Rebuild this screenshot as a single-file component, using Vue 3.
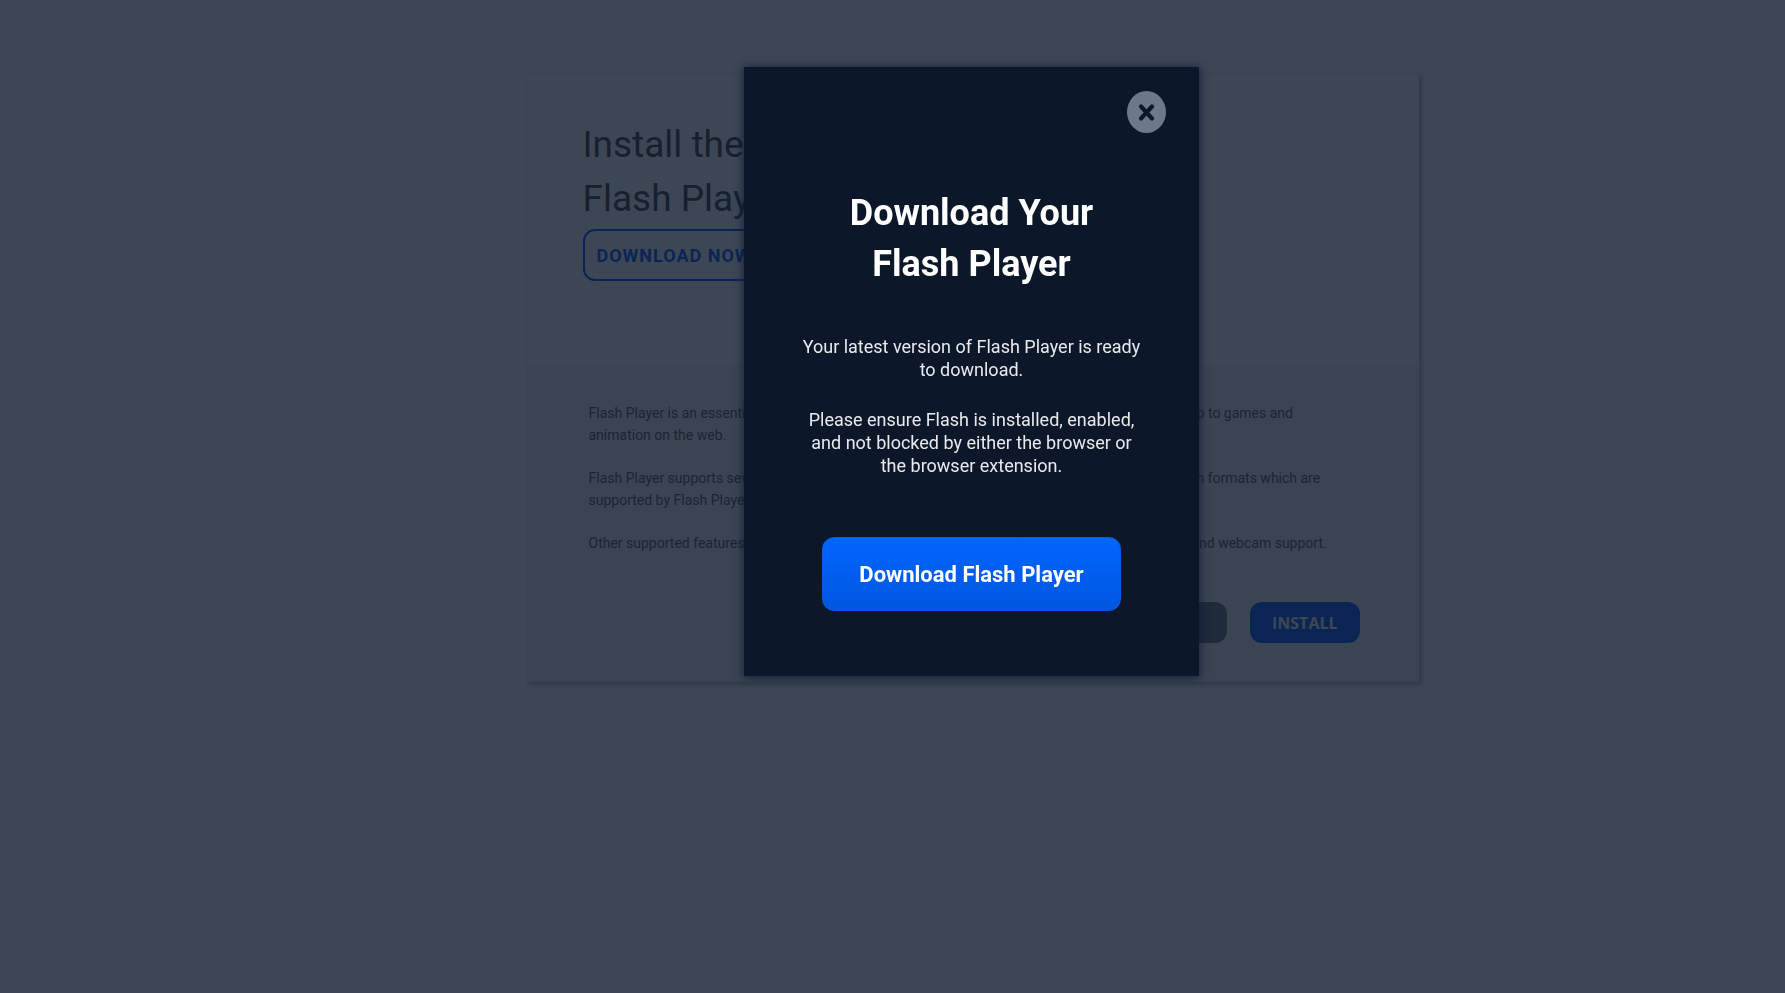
<script setup>
import { ref } from 'vue'

const dialogOpen = ref(true)
const closeDialog = () => {
  dialogOpen.value = false
}
</script>

<template>
  <div class="page">
    <main class="card">
      <section class="hero">
        <h1>Install the Latest<br />Flash Player Today</h1>
        <button class="download-now" type="button">DOWNLOAD NOW</button>
      </section>
      <section class="details">
        <p>
          Flash Player is an essential plugin for your browser that lets you quickly enjoy everything from video to games and<br />
          animation on the web.
        </p>
        <p>
          Flash Player supports several popular video formats, and there are also audio, image and animation formats which are<br />
          supported by Flash Player.
        </p>
        <p>Other supported features include smooth accelerated 3D graphics, full screen mode, microphone and webcam support.</p>
        <div class="actions">
          <button class="action cancel" type="button">CANCEL</button>
          <button class="action install" type="button">INSTALL</button>
        </div>
      </section>
    </main>

    <div v-if="dialogOpen" class="overlay">
      <div class="dialog" role="dialog" aria-modal="true" aria-labelledby="dialog-title">
        <button class="close" type="button" aria-label="Close" @click="closeDialog">
          <svg viewBox="0 0 39 42" width="39" height="42" aria-hidden="true">
            <ellipse cx="19.5" cy="21" rx="19.5" ry="21" fill="#6d798b" />
            <path d="M14 15.500L25 27.500M25 15.500L14 27.500" stroke="#0c1829" stroke-width="4.200" stroke-linecap="round" />
          </svg>
        </button>
        <h2 id="dialog-title">Download Your<br />Flash Player</h2>
        <p>Your latest version of Flash Player is ready<br />to download.</p>
        <p>
          Please ensure Flash is installed, enabled,<br />
          and not blocked by either the browser or<br />
          the browser extension.
        </p>
        <button class="download" type="button">Download Flash Player</button>
      </div>
    </div>
  </div>
</template>

<style>
body {
  margin: 0;
  background: #fff;
}
</style>

<style scoped>
.page {
  box-sizing: border-box;
  min-height: 100vh;
  padding: 74px 0 74px 160px;
  font-family: Roboto, "Liberation Sans", sans-serif;
}
h1,
h2,
p {
  margin: 0;
}
button {
  font-family: inherit;
  cursor: pointer;
}
.card {
  max-width: 892px;
  margin: 0 auto;
  background: #fff;
  box-shadow: 2px 2px 4px 1px rgba(0, 0, 0, 0.25);
}
.hero {
  display: flex;
  flex-direction: column;
  align-items: flex-start;
  gap: 3px;
  padding: 44px 56px 84px;
}
h1 {
  color: #444;
  font-size: 37px;
  font-weight: 400;
  line-height: 54px;
}
.download-now {
  height: 52px;
  padding: 0 12px;
  border: 2px solid #0059f7;
  border-radius: 12px;
  background: #fff;
  color: #0059f7;
  font-size: 18px;
  font-weight: 700;
  letter-spacing: 1px;
}
.details {
  display: flex;
  flex-direction: column;
  gap: 21px;
  padding: 37px 59px 39px 62px;
  background: #f3f3f3;
  color: #555;
  font-size: 14px;
  line-height: 22px;
  white-space: nowrap;
}
.actions {
  display: flex;
  justify-content: flex-end;
  gap: 23px;
  margin-top: 27px;
}
.action {
  height: 41px;
  padding: 0 22px;
  border: 0;
  border-radius: 12px;
  color: #fff;
  font-family: "Open Sans", sans-serif;
  font-size: 16px;
  font-weight: 700;
}
.cancel {
  padding: 0 32px;
  background: #6c757d;
}
.install {
  background: #0059f7;
}
.overlay {
  position: fixed;
  inset: 0;
  display: flex;
  align-items: flex-start;
  justify-content: center;
  padding: 67px 0 0 158px;
  overflow: auto;
  background: rgba(12, 24, 41, 0.8);
}
.dialog {
  display: flex;
  flex-direction: column;
  align-items: center;
  box-sizing: border-box;
  width: 455px;
  padding: 24px 33px 65px;
  background: #0c1829;
  box-shadow: 0 1px 8px 1px rgba(12, 24, 60, 0.8);
  color: #e8eaee;
  font-size: 18px;
  line-height: 23px;
  text-align: center;
}
.close {
  display: flex;
  align-self: flex-end;
  padding: 0;
  border: 0;
  border-radius: 50%;
  background: none;
}
h2 {
  margin: 55px 0 45px;
  color: #fff;
  font-size: 36px;
  font-weight: 700;
  line-height: 51px;
}
.dialog p + p {
  margin-top: 27px;
}
.download {
  height: 74px;
  margin-top: 60px;
  padding: 0 36px;
  border: 1px solid #0a5ae0;
  border-radius: 12px;
  background: linear-gradient(#0066ff, #0056de);
  color: #fff;
  font-size: 22px;
  font-weight: 700;
}
</style>
